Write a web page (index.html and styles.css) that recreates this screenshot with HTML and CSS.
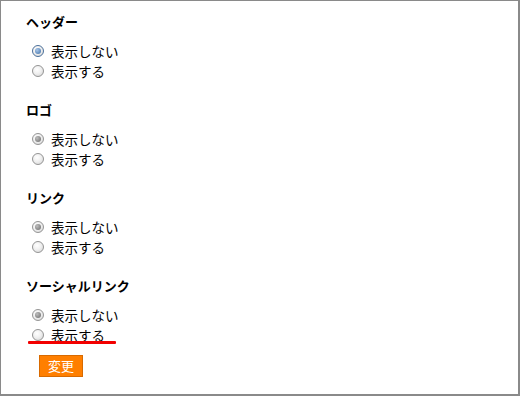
FILE: index.html
```html
<!DOCTYPE html>
<html lang="ja">
<head>
<meta charset="utf-8">
<link rel="stylesheet" href="styles.css">
</head>
<body>
<div class="page">
  <section class="group">
    <h3 class="title">ヘッダー</h3>
    <div class="opts">
      <label class="opt"><span class="radio checked focus"></span><span>表示しない</span></label>
      <label class="opt"><span class="radio"></span><span>表示する</span></label>
    </div>
  </section>
  <section class="group">
    <h3 class="title">ロゴ</h3>
    <div class="opts">
      <label class="opt"><span class="radio checked"></span><span>表示しない</span></label>
      <label class="opt"><span class="radio"></span><span>表示する</span></label>
    </div>
  </section>
  <section class="group">
    <h3 class="title">リンク</h3>
    <div class="opts">
      <label class="opt"><span class="radio checked"></span><span>表示しない</span></label>
      <label class="opt"><span class="radio"></span><span>表示する</span></label>
    </div>
  </section>
  <section class="group last">
    <h3 class="title">ソーシャルリンク</h3>
    <div class="opts">
      <label class="opt"><span class="radio checked"></span><span>表示しない</span></label>
      <label class="opt marked"><span class="radio"></span><span>表示する</span></label>
    </div>
  </section>
  <div class="actions">
    <button class="btn">変更</button>
  </div>
</div>
</body>
</html>
```
FILE: styles.css
```css
html, body {
  margin: 0;
  padding: 0;
  background: #fff;
}
.page {
  box-sizing: border-box;
  width: 520px;
  height: 396px;
  border: 1px solid #8a8a8a;
  border-right-width: 2px;
  border-bottom-width: 2px;
  padding: 12px 0 0 25px;
  font-family: "Noto Sans CJK JP", "DejaVu Sans", sans-serif;
  font-size: 13px;
  color: #000;
}
.group {
  display: flex;
  flex-direction: column;
  gap: 10px;
  margin-bottom: 20px;
}
.group.last {
  margin-bottom: 10px;
}
.title {
  margin: 0;
  font-size: 13px;
  font-weight: bold;
  line-height: 18px;
  height: 18px;
}
.opts {
  display: flex;
  flex-direction: column;
}
.opt {
  position: relative;
  display: flex;
  align-items: center;
  height: 20px;
  line-height: 20px;
  padding-left: 6px;
  gap: 7px;
  font-size: 13.5px;
}
.radio {
  box-sizing: border-box;
  width: 12px;
  height: 12px;
  border-radius: 50%;
  border: 1px solid #949494;
  background: radial-gradient(circle at 40% 35%, #ffffff 0%, #f0f0f0 45%, #d2d2d2 100%);
  display: flex;
  align-items: center;
  justify-content: center;
}
.radio.checked::after {
  content: "";
  width: 6px;
  height: 6px;
  border-radius: 50%;
  background: radial-gradient(circle at 35% 35%, #bdbdbd, #6a6a6a);
}
.radio.checked.focus {
  border-color: #4a6f9a;
}
.radio.checked.focus::after {
  background: radial-gradient(circle at 35% 35%, #a9c6e8, #3d6fa8);
}
.opt.marked::after {
  content: "";
  position: absolute;
  left: 2px;
  top: 16px;
  width: 88px;
  height: 3px;
  background: #f20000;
  border-radius: 1px;
}
.actions {
  padding-left: 13px;
}
.btn {
  box-sizing: border-box;
  width: 44px;
  height: 22px;
  padding: 0;
  border: 1px solid #d86a00;
  background: #ff7f00;
  color: #fff;
  font-family: "Noto Sans CJK JP", "DejaVu Sans", sans-serif;
  font-size: 13px;
  line-height: 20px;
}
```
